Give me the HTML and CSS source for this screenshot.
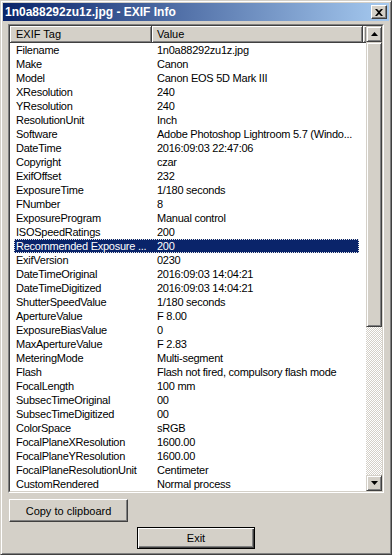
FILE: index.html
```html
<!DOCTYPE html>
<html lang="en">
<head>
    <meta charset="UTF-8">
    <title>1n0a88292zu1z.jpg - EXIF Info</title>
    <link rel="stylesheet" href="styles.css">
</head>
<body>
    <div class="window">
        <div class="titlebar">
            <span class="title">1n0a88292zu1z.jpg - EXIF Info</span>
            <span class="close-btn">
                <svg width="8" height="7" viewBox="0 0 8 7"><path d="M0 0h2l2 2 2-2h2L5 3.5 8 7H6L4 5 2 7H0l3-3.5z" fill="#000"/></svg>
            </span>
        </div>
        <div class="content">
            <div class="listview">
                <div class="list-inner">
                    <div class="list-body">
                        <div class="list-header">
                            <div class="hcell col-tag">EXIF Tag</div>
                            <div class="hcell col-value">Value</div>
                            <div class="hcell col-fill"></div>
                        </div>
                        <div class="row"><span class="c-tag">Filename</span><span class="c-value">1n0a88292zu1z.jpg</span></div>
                        <div class="row"><span class="c-tag">Make</span><span class="c-value">Canon</span></div>
                        <div class="row"><span class="c-tag">Model</span><span class="c-value">Canon EOS 5D Mark III</span></div>
                        <div class="row"><span class="c-tag">XResolution</span><span class="c-value">240</span></div>
                        <div class="row"><span class="c-tag">YResolution</span><span class="c-value">240</span></div>
                        <div class="row"><span class="c-tag">ResolutionUnit</span><span class="c-value">Inch</span></div>
                        <div class="row"><span class="c-tag">Software</span><span class="c-value">Adobe Photoshop Lightroom 5.7 (Windo...</span></div>
                        <div class="row"><span class="c-tag">DateTime</span><span class="c-value">2016:09:03 22:47:06</span></div>
                        <div class="row"><span class="c-tag">Copyright</span><span class="c-value">czar</span></div>
                        <div class="row"><span class="c-tag">ExifOffset</span><span class="c-value">232</span></div>
                        <div class="row"><span class="c-tag">ExposureTime</span><span class="c-value">1/180 seconds</span></div>
                        <div class="row"><span class="c-tag">FNumber</span><span class="c-value">8</span></div>
                        <div class="row"><span class="c-tag">ExposureProgram</span><span class="c-value">Manual control</span></div>
                        <div class="row"><span class="c-tag">ISOSpeedRatings</span><span class="c-value">200</span></div>
                        <div class="row selected"><span class="c-tag">Recommended Exposure ...</span><span class="c-value">200</span></div>
                        <div class="row"><span class="c-tag">ExifVersion</span><span class="c-value">0230</span></div>
                        <div class="row"><span class="c-tag">DateTimeOriginal</span><span class="c-value">2016:09:03 14:04:21</span></div>
                        <div class="row"><span class="c-tag">DateTimeDigitized</span><span class="c-value">2016:09:03 14:04:21</span></div>
                        <div class="row"><span class="c-tag">ShutterSpeedValue</span><span class="c-value">1/180 seconds</span></div>
                        <div class="row"><span class="c-tag">ApertureValue</span><span class="c-value">F 8.00</span></div>
                        <div class="row"><span class="c-tag">ExposureBiasValue</span><span class="c-value">0</span></div>
                        <div class="row"><span class="c-tag">MaxApertureValue</span><span class="c-value">F 2.83</span></div>
                        <div class="row"><span class="c-tag">MeteringMode</span><span class="c-value">Multi-segment</span></div>
                        <div class="row"><span class="c-tag">Flash</span><span class="c-value">Flash not fired, compulsory flash mode</span></div>
                        <div class="row"><span class="c-tag">FocalLength</span><span class="c-value">100 mm</span></div>
                        <div class="row"><span class="c-tag">SubsecTimeOriginal</span><span class="c-value">00</span></div>
                        <div class="row"><span class="c-tag">SubsecTimeDigitized</span><span class="c-value">00</span></div>
                        <div class="row"><span class="c-tag">ColorSpace</span><span class="c-value">sRGB</span></div>
                        <div class="row"><span class="c-tag">FocalPlaneXResolution</span><span class="c-value">1600.00</span></div>
                        <div class="row"><span class="c-tag">FocalPlaneYResolution</span><span class="c-value">1600.00</span></div>
                        <div class="row"><span class="c-tag">FocalPlaneResolutionUnit</span><span class="c-value">Centimeter</span></div>
                        <div class="row"><span class="c-tag">CustomRendered</span><span class="c-value">Normal process</span></div>
                    </div>
                    <div class="scrollbar">
                        <div class="sb-btn">
                            <svg width="7" height="4" viewBox="0 0 7 4"><path d="M3.5 0L7 4H0z" fill="#000"/></svg>
                        </div>
                        <div class="sb-thumb"></div>
                        <div class="sb-track"></div>
                        <div class="sb-btn">
                            <svg width="7" height="4" viewBox="0 0 7 4"><path d="M0 0h7L3.5 4z" fill="#000"/></svg>
                        </div>
                    </div>
                </div>
            </div>
            <button class="btn btn-copy">Copy to clipboard</button>
            <div class="exit-row">
                <button class="btn btn-exit">Exit</button>
            </div>
        </div>
    </div>
</body>
</html>
```

FILE: styles.css
```css
/* classic windows dialog */
* {
    box-sizing: border-box;
}
body {
    margin: 0;
    background: #d4d0c8;
    font-family: "Liberation Sans", Arial, sans-serif;
    font-size: 11px;
    color: #000;
}
.window {
    width: 392px;
    height: 555px;
    background: #d4d0c8;
    border: 1px solid;
    border-color: #d4d0c8 #404040 #404040 #d4d0c8;
    box-shadow: inset 1px 1px #fff, inset -1px -1px #808080;
    padding: 2px;
    display: flex;
    flex-direction: column;
}
.titlebar {
    height: 18px;
    background: linear-gradient(to right, #0a246a, #a6caf0);
    display: flex;
    align-items: center;
    justify-content: space-between;
    padding: 0 2px 0 2px;
    color: #fff;
    font-weight: bold;
    font-size: 12px;
}
.close-btn {
    width: 16px;
    height: 14px;
    background: #d4d0c8;
    border: 1px solid;
    border-color: #fff #404040 #404040 #fff;
    box-shadow: inset -1px -1px #808080;
    display: flex;
    align-items: center;
    justify-content: center;
}
.content {
    padding: 3px 5px 0 5px;
}
.listview {
    height: 469px;
    border: 1px solid;
    border-color: #808080 #fff #fff #808080;
}
.list-inner {
    height: 100%;
    border: 1px solid;
    border-color: #404040 #d4d0c8 #d4d0c8 #404040;
    background: #fff;
    display: flex;
}
.list-body {
    flex: 1;
    overflow: hidden;
}
.list-header {
    display: flex;
    height: 17px;
}
.hcell {
    height: 17px;
    line-height: 16px;
    background: #d4d0c8;
    border-right: 1px solid #404040;
    border-bottom: 1px solid #404040;
    box-shadow: inset 1px 1px #fff, inset -1px -1px #808080;
    white-space: nowrap;
}
.col-tag {
    width: 142px;
    padding-left: 6px;
}
.col-value {
    width: 211px;
    padding-left: 5px;
}
.col-fill {
    flex: 1;
    border-right: none;
}
.row {
    display: flex;
    height: 14px;
    line-height: 14px;
    margin-left: 4px;
    width: 345px;
    white-space: nowrap;
    letter-spacing: -0.25px;
}
.c-tag {
    width: 138px;
    padding-left: 2px;
    overflow: hidden;
}
.c-value {
    flex: 1;
    padding-left: 5px;
    overflow: hidden;
}
.row.selected {
    background: #0a246a;
    color: #fff;
    outline: 1px dotted #e8e8e8;
    outline-offset: -1px;
}
.scrollbar {
    width: 16px;
    display: flex;
    flex-direction: column;
}
.sb-btn,
.sb-thumb {
    background: #d4d0c8;
    border: 1px solid;
    border-color: #d4d0c8 #404040 #404040 #d4d0c8;
    box-shadow: inset 1px 1px #fff, inset -1px -1px #808080;
}
.sb-btn {
    height: 16px;
    display: flex;
    align-items: center;
    justify-content: center;
}
.sb-thumb {
    height: 285px;
}
.sb-track {
    flex: 1;
    background: repeating-conic-gradient(#fff 0 25%, #d4d0c8 0 50%) 0 0 / 2px 2px;
}
.btn {
    font: inherit;
    color: #000;
    background: #d4d0c8;
    border: 1px solid;
    border-color: #fff #404040 #404040 #fff;
    box-shadow: inset -1px -1px #808080;
    padding: 0;
    cursor: pointer;
}
.btn-copy {
    display: block;
    width: 119px;
    height: 23px;
    margin: 6px 0 0 1px;
}
.exit-row {
    display: flex;
    justify-content: center;
    margin-top: 5px;
}
.btn-exit {
    width: 118px;
    height: 22px;
    border: 1px solid #000;
    box-shadow: inset 1px 1px #fff, inset -1px -1px #404040, inset -2px -2px #808080;
}
```
